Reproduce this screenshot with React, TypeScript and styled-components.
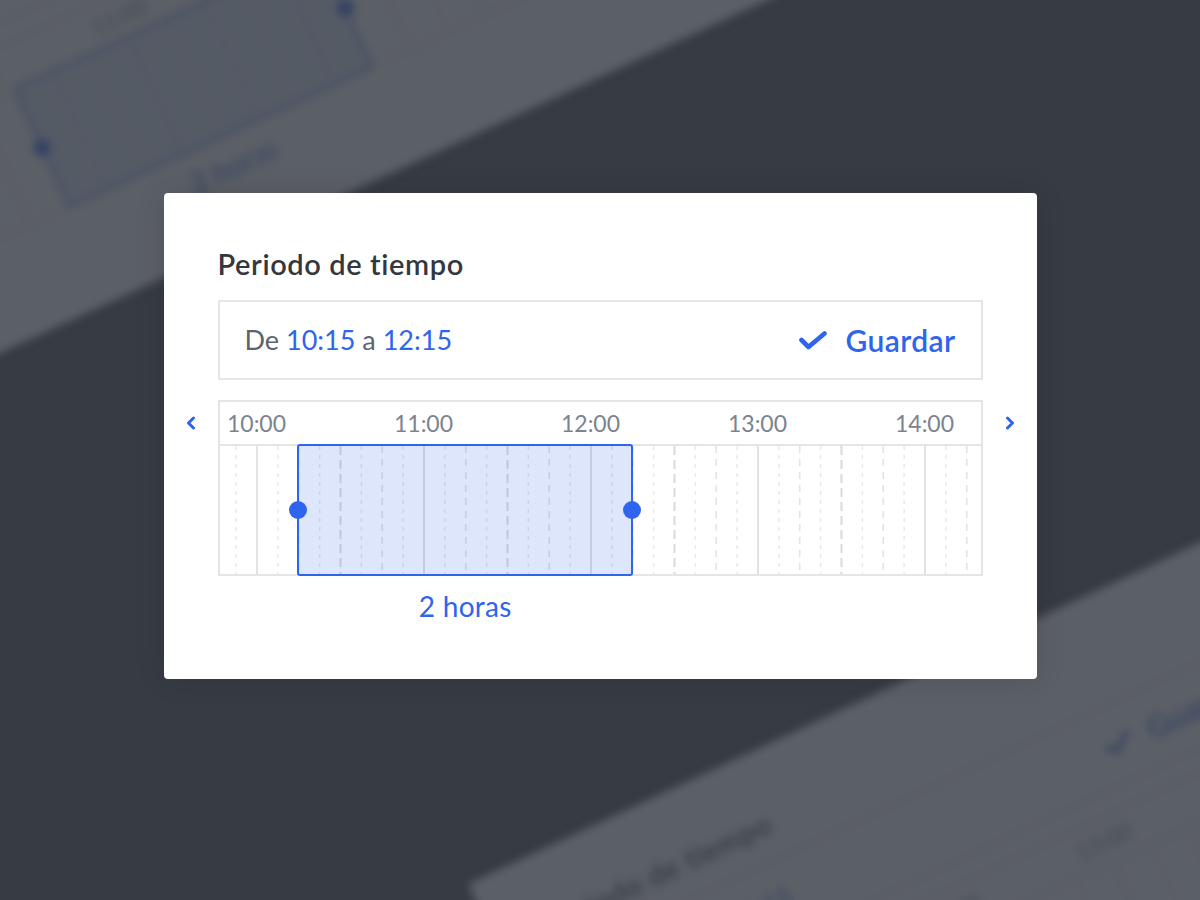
import React from "react";
import styled, { createGlobalStyle } from "styled-components";

const BLUE = "#2f64ee";
const HOUR = 167;
const ORIGIN = 37;
const GRID_W = 761;
const GRID_H = 128;

const HOURS = ["10:00", "11:00", "12:00", "13:00", "14:00"];
const START = 10.25;
const END = 12.25;
const xOf = (h: number) => ORIGIN + (h - 10) * HOUR;

const GlobalStyle = createGlobalStyle`
  html, body { margin: 0; padding: 0; }
  body {
    background: #373c44;
    font-family: Lato, "Open Sans", "Noto Sans", sans-serif;
    -webkit-font-smoothing: antialiased;
  }
`;

const Page = styled.div`
  position: relative;
  width: 1200px;
  height: 900px;
  overflow: hidden;
  background: #373c44;
  display: flex;
  justify-content: center;
  align-items: flex-start;
  padding-top: 193px;
  box-sizing: border-box;
`;

const Ghost = styled.div<{ $x: number; $y: number; $rot: number; $scale: number }>`
  position: absolute;
  left: ${(p) => p.$x}px;
  top: ${(p) => p.$y}px;
  transform-origin: 0 0;
  transform: rotate(${(p) => p.$rot}deg) scale(${(p) => p.$scale});
  opacity: 0.18;
  filter: blur(4px);
  pointer-events: none;
`;

const Card = styled.section<{ $front?: boolean }>`
  position: relative;
  z-index: ${(p) => (p.$front ? 2 : 0)};
  width: 873px;
  height: 486px;
  box-sizing: border-box;
  background: #fff;
  border-radius: 4px;
  padding: 54px 54px 0;
  display: flex;
  flex-direction: column;
  box-shadow: 0 0 30px rgba(0, 0, 0, 0.12);
`;

const Title = styled.h2`
  margin: 0;
  font-size: 29px;
  line-height: 33px;
  letter-spacing: 0.6px;
  font-weight: 600;
  color: #32383e;
`;

const InputBox = styled.div`
  margin-top: 20px;
  height: 80px;
  box-sizing: border-box;
  border: 2px solid #e3e5e8;
  padding: 0 25px;
  display: flex;
  align-items: center;
  justify-content: space-between;
`;

const RangeText = styled.div`
  font-size: 27px;
  line-height: 32px;
  color: #5d646e;
`;

const Time = styled.span`
  color: ${BLUE};
`;

const SaveButton = styled.button`
  border: 0;
  background: none;
  padding: 0;
  display: flex;
  align-items: center;
  gap: 19px;
  font-family: inherit;
  font-size: 30px;
  line-height: 32px;
  letter-spacing: 0.4px;
  font-weight: 600;
  color: ${BLUE};
  cursor: pointer;
`;

const TimelineRow = styled.div`
  margin: 20px -54px 0;
  display: grid;
  grid-template-columns: 54px 1fr 54px;
  align-items: start;
`;

const NavButton = styled.button`
  height: 46px;
  border: 0;
  background: none;
  padding: 0;
  display: flex;
  align-items: center;
  justify-content: center;
  cursor: pointer;
`;

const Timeline = styled.div`
  border: 2px solid #e3e5e8;
  box-sizing: border-box;
`;

const AxisHeader = styled.div`
  position: relative;
  height: 42px;
  border-bottom: 2px solid #e3e5e8;
`;

const AxisLabel = styled.span`
  position: absolute;
  top: 0;
  height: 42px;
  display: flex;
  align-items: center;
  transform: translateX(-50%);
  font-size: 23px;
  color: #7b838f;
  white-space: nowrap;
`;

const GridArea = styled.div`
  position: relative;
  height: ${GRID_H}px;
`;

const GridSvg = styled.svg`
  display: block;
`;

const Selection = styled.div`
  position: absolute;
  top: -2px;
  bottom: -2px;
  box-sizing: border-box;
  border: 2px solid ${BLUE};
  border-radius: 3px;
  background: rgba(47, 100, 238, 0.16);
`;

const Handle = styled.span<{ $side: "left" | "right" }>`
  position: absolute;
  top: 50%;
  ${(p) => p.$side}: -10px;
  width: 18px;
  height: 18px;
  margin-top: -9px;
  border-radius: 50%;
  background: ${BLUE};
`;

const Duration = styled.div`
  margin-top: 14px;
  font-size: 28px;
  line-height: 32px;
  letter-spacing: 0.3px;
  color: ${BLUE};
  text-align: center;
  white-space: nowrap;
`;

const CheckIcon = () => (
  <svg width="28" height="19" viewBox="0 0 28 19" aria-hidden>
    <path d="M2.5 9 L9.5 16 L25.5 2.5" fill="none" stroke={BLUE} strokeWidth="4.6" strokeLinecap="round" strokeLinejoin="round" />
  </svg>
);

const Chevron = ({ dir }: { dir: "left" | "right" }) => (
  <svg width="10" height="14" viewBox="0 0 10 14" aria-hidden>
    <path
      d={dir === "left" ? "M7.5 2 L2.5 7 L7.5 12" : "M2.5 2 L7.5 7 L2.5 12"}
      fill="none"
      stroke={BLUE}
      strokeWidth="3"
      strokeLinecap="round"
      strokeLinejoin="round"
    />
  </svg>
);

type LineKind = "hour" | "half" | "quarter" | "eighth";
const LINE_STYLE: Record<LineKind, { color: string; width: number; dash?: string }> = {
  hour: { color: "#e0e2e5", width: 2 },
  half: { color: "#d8dadd", width: 2, dash: "9 5" },
  quarter: { color: "#e1e3e6", width: 1.6, dash: "7 6" },
  eighth: { color: "#e8e9eb", width: 1.5, dash: "4 5" },
};

const GridLines = () => {
  const lines: { x: number; kind: LineKind }[] = [];
  for (let k = -2; k < 40; k++) {
    const x = ORIGIN + (k * HOUR) / 8;
    if (x <= 2 || x >= GRID_W - 2) continue;
    const m = ((k % 8) + 8) % 8;
    const kind: LineKind = m === 0 ? "hour" : m === 4 ? "half" : m % 2 === 0 ? "quarter" : "eighth";
    lines.push({ x, kind });
  }
  return (
    <GridSvg width={GRID_W} height={GRID_H} aria-hidden>
      {lines.map((l, i) => {
        const s = LINE_STYLE[l.kind];
        return (
          <line
            key={i}
            x1={l.x}
            x2={l.x}
            y1={0}
            y2={GRID_H}
            stroke={s.color}
            strokeWidth={s.width}
            strokeDasharray={s.dash}
          />
        );
      })}
    </GridSvg>
  );
};

const PeriodCard = ({ front }: { front?: boolean }) => {
  const selLeft = xOf(START);
  const selWidth = xOf(END) - xOf(START);
  return (
    <Card $front={front} aria-hidden={front ? undefined : true}>
      <Title>Periodo de tiempo</Title>
      <InputBox>
        <RangeText>
          De <Time>10:15</Time> a <Time>12:15</Time>
        </RangeText>
        <SaveButton>
          <CheckIcon />
          Guardar
        </SaveButton>
      </InputBox>
      <TimelineRow>
        <NavButton aria-label="Anterior">
          <Chevron dir="left" />
        </NavButton>
        <Timeline>
          <AxisHeader>
            {HOURS.map((h, i) => (
              <AxisLabel key={h} style={{ left: xOf(10 + i) }}>
                {h}
              </AxisLabel>
            ))}
          </AxisHeader>
          <GridArea>
            <GridLines />
            <Selection style={{ left: selLeft - 1, width: selWidth + 2 }}>
              <Handle $side="left" />
              <Handle $side="right" />
            </Selection>
          </GridArea>
        </Timeline>
        <NavButton aria-label="Siguiente">
          <Chevron dir="right" />
        </NavButton>
      </TimelineRow>
      <Duration style={{ marginLeft: 2 + selLeft, width: selWidth }}>2 horas</Duration>
    </Card>
  );
};

export default function App() {
  return (
    <>
      <GlobalStyle />
      <Page>
        <Ghost $x={-213} $y={-84} $rot={-24.7} $scale={1}>
          <PeriodCard />
        </Ghost>
        <Ghost $x={468} $y={884} $rot={-25} $scale={1}>
          <PeriodCard />
        </Ghost>
        <PeriodCard front />
      </Page>
    </>
  );
}
